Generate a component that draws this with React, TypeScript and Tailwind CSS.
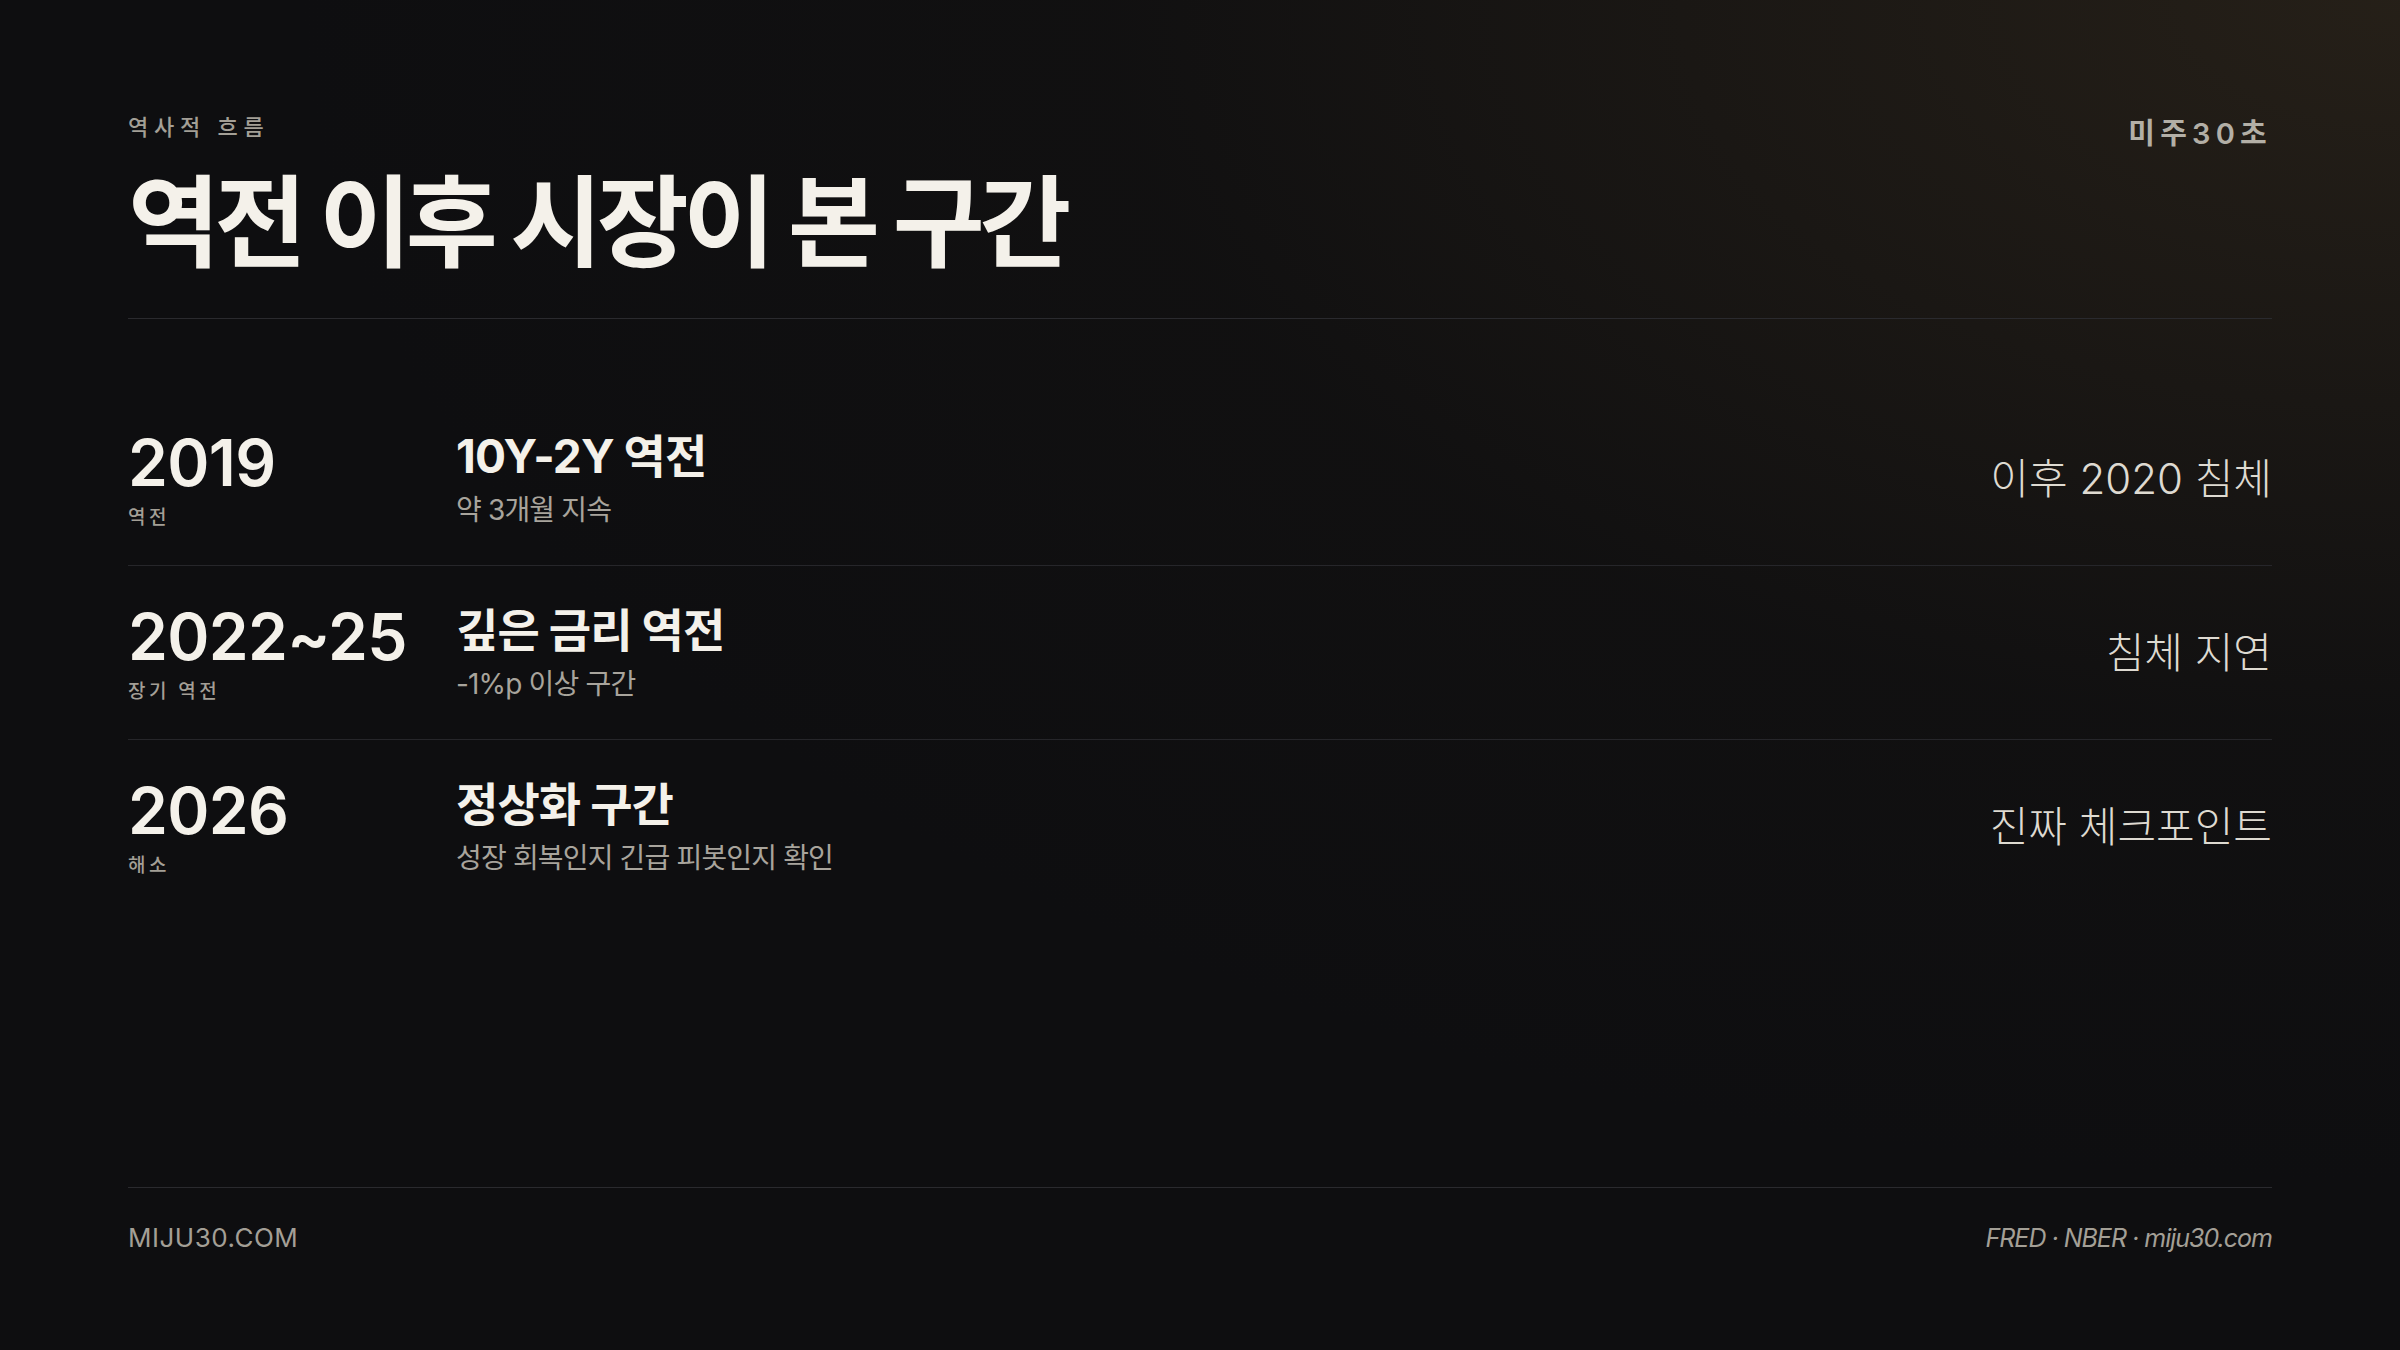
const rows = [
  { year: '2019', tag: '역전', title: '10Y-2Y 역전', sub: '약 3개월 지속', note: '이후 2020 침체' },
  { year: '2022~25', tag: '장기 역전', title: '깊은 금리 역전', sub: '-1%p 이상 구간', note: '침체 지연' },
  { year: '2026', tag: '해소', title: '정상화 구간', sub: '성장 회복인지 긴급 피봇인지 확인', note: '진짜 체크포인트' },
];

export default function App() {
  return (
    <div
      className="relative w-[2400px] h-[1350px] overflow-hidden bg-[#0e0e10] flex flex-col px-[128px] text-[#f4f1ea]"
      style={{ fontFamily: 'Inter, "Noto Sans CJK KR", sans-serif' }}
    >
      {/* warm glow, top right */}
      <div className="absolute inset-0 pointer-events-none bg-[radial-gradient(ellipse_at_top_right,rgba(66,53,34,0.45),rgba(30,26,20,0.18)_38%,transparent_62%)]" />

      {/* header */}
      <header className="relative flex justify-between items-start pt-[112px] pb-[36px] border-b border-[#2a2a2e]">
        <div className="flex flex-col">
          <span className="text-[22px] leading-[30px] font-medium tracking-[0.26em] text-[#a39f96]">역사적 흐름</span>
          <h1 className="mt-[22px] text-[100px] leading-[118px] font-bold tracking-[-0.055em]">역전 이후 시장이 본 구간</h1>
        </div>
        <span className="mt-[4px] text-[29px] leading-[36px] font-semibold tracking-[0.18em] text-[#b3afa6]">미주30초</span>
      </header>

      {/* timeline rows */}
      <div className="relative mt-[73px] flex flex-col divide-y divide-[#26262a]">
        {rows.map((r) => (
          <div key={r.year} className="grid grid-cols-[328px_1fr_auto] items-center h-[174px]">
            <div className="flex flex-col">
              <span className="text-[64px] leading-[72px] font-semibold tracking-[-0.01em]">{r.year}</span>
              <span className="mt-[6px] text-[19px] leading-[26px] font-medium tracking-[0.18em] text-[#a39f96]">{r.tag}</span>
            </div>
            <div className="flex flex-col">
              <span className="text-[46px] leading-[52px] font-bold tracking-[-0.02em]">{r.title}</span>
              <span className="mt-[10px] text-[28px] leading-[36px] tracking-[-0.03em] text-[#a8a49c]">{r.sub}</span>
            </div>
            <span className="text-[42px] leading-[52px] font-light text-[#dedad1] text-right">{r.note}</span>
          </div>
        ))}
      </div>

      {/* footer */}
      <footer className="relative mt-auto flex justify-between items-center border-t border-[#2a2a2e] pt-[32px] pb-[94px]">
        <span className="text-[26px] leading-[36px] tracking-[0.02em] text-[#a39f96]">MIJU30.COM</span>
        <span className="text-[25px] leading-[36px] italic tracking-[-0.04em] text-[#a39f96]">FRED · NBER · miju30.com</span>
      </footer>
    </div>
  );
}
